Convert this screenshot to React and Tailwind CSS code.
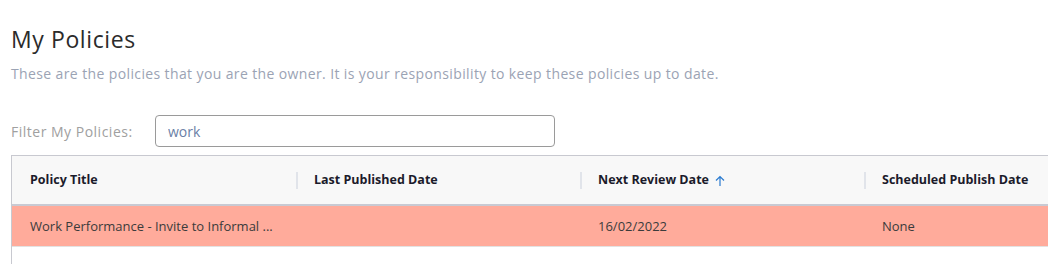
import React, { useState } from 'react';

const columns = [
  { key: 'title', label: 'Policy Title' },
  { key: 'published', label: 'Last Published Date' },
  { key: 'review', label: 'Next Review Date', sorted: true },
  { key: 'scheduled', label: 'Scheduled Publish Date' },
];

const rows = [
  { title: 'Work Performance - Invite to Informal ...', published: '', review: '16/02/2022', scheduled: 'None' },
];

export default function App() {
  const [filter, setFilter] = useState('work');

  return (
    <div className="min-h-screen bg-white overflow-hidden pt-[24px] pl-[11px]" style={{ width: 1048, height: 264 }}>
      <h1 className="text-[23px] leading-[30px] text-[#2b2b2b] font-['Open_Sans',sans-serif] font-normal tracking-[0.6px]">My Policies</h1>
      <p className="mt-[11px] text-[14px] leading-[18px] text-[#9ba3b4] font-['Open_Sans',sans-serif] tracking-[0.38px]">
        These are the policies that you are the owner. It is your responsibility to keep these policies up to date.
      </p>

      <div className="flex items-center mt-[32px]">
        <label className="w-[144px] shrink-0 text-[14px] text-[#a0a0a0] font-['Open_Sans',sans-serif] tracking-[0.5px]">Filter My Policies:</label>
        <input
          value={filter}
          onChange={(e) => setFilter(e.target.value)}
          className="w-[400px] h-[32px] border border-[#9a9a9a] rounded-[4px] px-[12px] text-[14px] text-[#6b7fa6] font-['Open_Sans',sans-serif] outline-none"
        />
      </div>

      <div className="mt-[8px] border-l border-t border-[#c8c9d0] w-[1200px] h-[120px] font-['Open_Sans',sans-serif]">
        <div className="flex h-[50px] bg-[#f8f8f8] border-b-2 border-[#c9cad3]">
          {columns.map((c, i) => (
            <div key={c.key} className="w-[284px] shrink-0 flex items-center relative pt-[1px]">
              {i > 0 && <span className="absolute left-0 top-[16px] w-[2px] h-[17px] bg-[#e1e4ea]" />}
              <span className="pl-[18px] text-[12.5px] font-bold text-[#1b1b2b]">{c.label}</span>
              {c.sorted && (
                <svg className="ml-[6px]" width="10" height="12" viewBox="0 0 10 12" fill="none" stroke="#2b7bd0" strokeWidth="1.2">
                  <path d="M5 11V1.5M1 5.5L5 1.5L9 5.5" />
                </svg>
              )}
            </div>
          ))}
        </div>
        {rows.map((r, idx) => (
          <div key={idx} className="flex h-[41px] bg-[#ffab9b] border-b border-[#e2e2e2]">
            {columns.map((c) => (
              <div key={c.key} className="w-[284px] shrink-0 flex items-center pl-[18px] pt-[2px] text-[13px] text-[#3b3b3b]">
                {r[c.key]}
              </div>
            ))}
          </div>
        ))}
      </div>
    </div>
  );
}
